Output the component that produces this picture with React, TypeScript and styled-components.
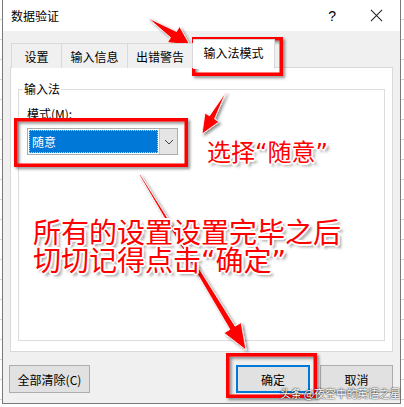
import styled, { createGlobalStyle } from "styled-components";

const GlobalStyle = createGlobalStyle`
  html, body {
    margin: 0;
    padding: 0;
    background: #ffffff;
  }
  body {
    font-family: "Noto Sans CJK SC", "Noto Sans", sans-serif;
    font-size: 12px;
    color: #000;
  }
`;

const tabs = [
  { label: "设置", width: 51 },
  { label: "输入信息", width: 66 },
  { label: "出错警告", width: 65 },
  { label: "输入法模式", width: 82, active: true },
];

const App = () => {
  return (
    <Stage>
      <GlobalStyle />
      <Dialog>
        <TitleBar>
          <Title>数据验证</Title>
          <TitleTools>
            <Help>?</Help>
            <CloseIcon viewBox="0 0 14 14">
              <path d="M1 1 L13 13 M13 1 L1 13" stroke="#222" strokeWidth="1.1" />
            </CloseIcon>
          </TitleTools>
        </TitleBar>

        <Body>
          <TabRow>
            {tabs.map((t) => (
              <Tab key={t.label} $width={t.width} $active={!!t.active}>
                {t.label}
              </Tab>
            ))}
          </TabRow>

          <Panel>
            <GroupBox>
              <Legend>输入法</Legend>
              <FieldLabel>模式(M):</FieldLabel>
              <Combo>
                <ComboValue>
                  <Selected>随意</Selected>
                </ComboValue>
                <ComboButton>
                  <svg width="10" height="6" viewBox="0 0 10 6">
                    <path d="M1 1 L5 5 L9 1" fill="none" stroke="#444" strokeWidth="1" />
                  </svg>
                </ComboButton>
              </Combo>
            </GroupBox>
          </Panel>

          <Footer>
            <Button $width={81}>全部清除(C)</Button>
            <ButtonGroup>
              <Button $width={74} $primary>
                确定
              </Button>
              <Button $width={73}>取消</Button>
            </ButtonGroup>
          </Footer>
        </Body>
      </Dialog>

      <Overlay viewBox="0 0 404 407">
        <defs>
          <filter id="shadow" x="-20%" y="-20%" width="140%" height="140%">
            <feDropShadow dx="2" dy="2" stdDeviation="1.5" floodColor="#000" floodOpacity="0.45" />
          </filter>
        </defs>
        <g filter="url(#shadow)" fill="none" stroke="#ff0000" strokeWidth="3.5">
          <rect x="193.75" y="38.75" width="87.5" height="35.5" />
          <rect x="15.75" y="119.75" width="170.5" height="45.5" />
          <rect x="227.75" y="354.75" width="87.5" height="41.5" />
        </g>
        <g filter="url(#shadow)" fill="#ff0000" stroke="#ffffff" strokeWidth="0.8">
          <polygon points="148,18 170.5,37.5 167.5,42.5 190,45 179.5,26.5 176.5,31.5" />
          <polygon points="226,92 209.5,115.8 205,113 202,134 219,121.8 214.5,119" />
          <polygon points="139.5,175.3 229.9,329.4 224,333 246,350 241.1,322.6 235.1,326.2 140.5,174.7" />
        </g>
      </Overlay>

      <Note $x={207} $y={139} $size={24}>
        选择<Quote>“</Quote>随意<Quote>”</Quote>
      </Note>
      <Note $x={33} $y={217} $size={28}>
        所有的设置设置完毕之后
        <br />
        切切记得点击<Quote>“</Quote>确定<Quote>”</Quote>
      </Note>
      <Watermark>头条 @夜空中的英语之星</Watermark>
    </Stage>
  );
};

const Stage = styled.div`
  position: relative;
  width: 404px;
  height: 407px;
  overflow: hidden;
  background: repeating-linear-gradient(
    to bottom,
    #ffffff 0,
    #ffffff 19px,
    #d4d4d4 19px,
    #d4d4d4 20px
  );
`;

const Dialog = styled.div`
  margin-left: 2px;
  width: 397px;
  height: 403px;
  border: 1px solid #7a7a7a;
  border-top: none;
  background: #f0f0f0;
  display: flex;
  flex-direction: column;
`;

const TitleBar = styled.div`
  height: 31px;
  flex: none;
  background: #ffffff;
  display: flex;
  align-items: center;
  justify-content: space-between;
  padding-left: 8px;
`;

const Title = styled.div`
  font-size: 12px;
  line-height: 16px;
`;

const TitleTools = styled.div`
  display: flex;
  align-items: center;
  gap: 34px;
  padding-right: 17px;
`;

const Help = styled.span`
  font-family: "Liberation Sans", sans-serif;
  font-size: 14px;
`;

const CloseIcon = styled.svg`
  width: 13px;
  height: 13px;
`;

const Body = styled.div`
  flex: 1;
  display: flex;
  flex-direction: column;
  padding: 7px 7px 10px;
`;

const TabRow = styled.div`
  display: flex;
  align-items: flex-end;
  height: 30px;
  padding-left: 1px;
  position: relative;
  z-index: 1;
`;

const Tab = styled.div<{ $width: number; $active: boolean }>`
  width: ${(p) => p.$width}px;
  height: ${(p) => (p.$active ? 30 : 25)}px;
  box-sizing: border-box;
  display: flex;
  align-items: center;
  justify-content: center;
  padding-bottom: ${(p) => (p.$active ? 4 : 0)}px;
  margin-bottom: ${(p) => (p.$active ? -1 : 0)}px;
  background: ${(p) => (p.$active ? "#ffffff" : "#f0f0f0")};
  border: 1px solid #d9d9d9;
  border-bottom: none;
  border-left: ${(p) => (p.$width === 51 ? "1px solid #d9d9d9" : "none")};
  font-size: 12px;
`;

const Panel = styled.div`
  height: 285px;
  box-sizing: border-box;
  margin-top: -1px;
  background: #ffffff;
  border: 1px solid #d9d9d9;
  display: flex;
  flex-direction: column;
  padding: 13px 7px 10px;
`;

const GroupBox = styled.fieldset`
  flex: 1;
  margin: 0;
  padding: 0 8px;
  border: 1px solid #dcdcdc;
  min-width: 0;
`;

const Legend = styled.legend`
  font-size: 12px;
  line-height: 16px;
  padding: 0 1px;
  margin-left: -4px;
`;

const FieldLabel = styled.div`
  font-size: 12px;
  line-height: 16px;
  margin: 9px 0 6px;
`;

const Combo = styled.div`
  width: 151px;
  height: 27px;
  box-sizing: border-box;
  border: 1px solid #adadad;
  background: #ffffff;
  display: flex;
`;

const ComboValue = styled.div`
  flex: 1;
  padding: 1px;
  display: flex;
`;

const Selected = styled.div`
  flex: 1;
  background: #0078d7;
  color: #ffffff;
  border: 1px dotted #f3c96b;
  display: flex;
  align-items: center;
  padding-left: 2px;
  font-size: 12px;
`;

const ComboButton = styled.div`
  width: 17px;
  background: #e5e5e5;
  border-left: 1px solid #c8c8c8;
  display: flex;
  align-items: center;
  justify-content: center;
`;

const Footer = styled.div`
  display: flex;
  justify-content: space-between;
  align-items: center;
  padding-top: 13px;
  margin-left: -1px;
`;

const ButtonGroup = styled.div`
  display: flex;
  gap: 10px;
`;

const Button = styled.button<{ $width: number; $primary?: boolean }>`
  width: ${(p) => p.$width}px;
  height: 28px;
  box-sizing: border-box;
  background: #e1e1e1;
  border: ${(p) => (p.$primary ? "2px solid #0078d7" : "1px solid #adadad")};
  font-family: "Noto Sans CJK SC", sans-serif;
  font-size: 12px;
  color: #000;
  padding: 0;
`;

const Overlay = styled.svg`
  position: absolute;
  left: 0;
  top: 0;
  width: 404px;
  height: 407px;
  pointer-events: none;
`;

const Note = styled.div<{ $x: number; $y: number; $size: number }>`
  position: absolute;
  left: ${(p) => p.$x}px;
  top: ${(p) => p.$y}px;
  font-family: "Noto Sans CJK SC", sans-serif;
  font-size: ${(p) => p.$size}px;
  line-height: ${(p) => p.$size}px;
  color: #ff0000;
  white-space: nowrap;
  text-shadow: 1px 1px 0 #fff, -1px -1px 0 #fff, 1px -1px 0 #fff, -1px 1px 0 #fff,
    2px 0 0 #fff, -2px 0 0 #fff, 0 2px 0 #fff, 0 -2px 0 #fff,
    3px 3px 3px rgba(0, 0, 0, 0.45);
`;

const Quote = styled.span`
  font-family: "DejaVu Sans", sans-serif;
`;

const Watermark = styled.div`
  position: absolute;
  left: 280px;
  top: 386px;
  font-family: "Noto Sans CJK SC", sans-serif;
  font-size: 11px;
  line-height: 14px;
  color: #ffffff;
  white-space: nowrap;
  letter-spacing: -0.2px;
  text-shadow: 0 0 2px rgba(0, 0, 0, 0.8), 0 0 1px rgba(0, 0, 0, 0.8);
`;

export default App;
